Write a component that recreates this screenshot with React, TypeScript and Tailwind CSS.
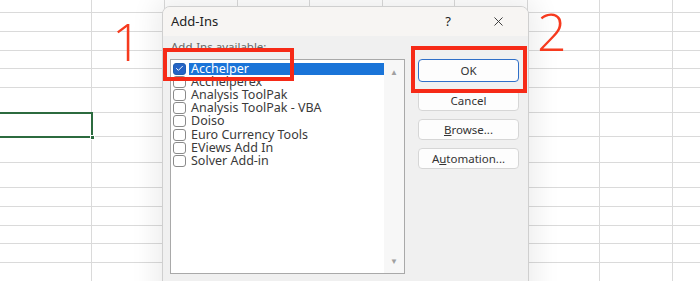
import { Check, X } from "lucide-react";

const rowHeights = [13, 19, 19, 18, 19, 25, 24, 26, 25, 19, 19, 18, 19, 30];
const colWidths = [92, 73, 73, 72, 73, 72, 73, 72, 73, 40];

const addIns = [
  "Acchelper",
  "Acchelperex",
  "Analysis ToolPak",
  "Analysis ToolPak - VBA",
  "Doiso",
  "Euro Currency Tools",
  "EViews Add In",
  "Solver Add-in",
];

function Sheet() {
  return (
    <div className="flex flex-col">
      {rowHeights.map((h, r) => (
        <div key={r} className="flex" style={{ height: h }}>
          {colWidths.map((w, c) => (
            <div
              key={c}
              className="shrink-0 border-r border-b border-[#dadada]"
              style={{ width: w }}
            />
          ))}
        </div>
      ))}
    </div>
  );
}

function DialogButton({
  label,
  focused,
}: {
  label: React.ReactNode;
  focused?: boolean;
}) {
  return (
    <button
      type="button"
      className={`flex items-center justify-center rounded-[4px] bg-[#fdfdfd] text-[11.5px] text-[#333] ${
        focused
          ? "h-[23px] border border-[#2f6fc8]"
          : "h-[21px] border border-[#d6d6d6]"
      }`}
    >
      {label}
    </button>
  );
}

function AddInsDialog() {
  return (
    <div className="absolute left-[162px] top-[6px] h-[300px] w-[367px] overflow-hidden rounded-t-[8px] border border-[#cfcfcf] bg-[#f0f0f0] shadow-[0_0_26px_8px_rgba(0,0,0,0.07)] font-['Noto_Sans',sans-serif]">
      <div className="flex h-[29px] items-center bg-[#f7f5f3] pl-[8px] pr-[22px] text-[13px] text-[#222]">
        <span>Add-Ins</span>
        <span className="ml-auto mr-[40px] text-[13px]">?</span>
        <X className="h-[15px] w-[15px] text-[#333]" strokeWidth={1.5} />
      </div>
      <div className="px-[8px] pt-[4px] text-[11.5px] leading-[14px] text-[#666]">
        Add-Ins available:
      </div>
      <div className="mt-[5px] flex gap-[13px] pl-[7px]">
        <div className="flex h-[215px] w-[235px] border border-[#a9a9a9] bg-white">
          <div className="flex flex-1 flex-col pt-[2px]">
            {addIns.map((name, i) => {
              const sel = i === 0;
              return (
                <div key={name} className="flex h-[13.2px] items-center">
                  <div
                    className={`ml-[2px] flex h-[12px] w-[13px] shrink-0 items-center justify-center rounded-[3px] border ${
                      sel
                        ? "border-[#1f5fb0] bg-[#2563c4]"
                        : "border-[#8a8a8a] bg-white"
                    }`}
                  >
                    {sel && (
                      <Check className="h-[9px] w-[9px] text-white" strokeWidth={2.5} />
                    )}
                  </div>
                  <div
                    className={`ml-[3px] flex h-[12px] flex-1 items-center pl-[2px] text-[12.5px] leading-[12px] ${
                      sel ? "bg-[#1a74d8] text-white" : "text-[#3a3a3a]"
                    }`}
                  >
                    {name}
                  </div>
                </div>
              );
            })}
          </div>
          <div className="flex w-[20px] flex-col items-center justify-between bg-[#f7f7f7] py-[6px] text-[8px] text-[#a0a0a0]">
            <span>▲</span>
            <span>▼</span>
          </div>
        </div>
        <div className="flex w-[101px] flex-col gap-[8px]">
          <DialogButton label="OK" focused />
          <DialogButton label="Cancel" />
          <DialogButton
            label={
              <span>
                <span className="underline">B</span>rowse...
              </span>
            }
          />
          <DialogButton
            label={
              <span>
                A<span className="underline">u</span>tomation...
              </span>
            }
          />
        </div>
      </div>
      <div className="px-[8px] pt-[3px] text-[11.5px] text-[#333]">Acchelper</div>
    </div>
  );
}

export default function App() {
  return (
    <div className="relative h-[281px] w-[700px] overflow-hidden bg-white">
      <Sheet />
      {/* selected cell */}
      <div className="absolute left-[-2px] top-[112px] h-[26px] w-[95px] border-2 border-[#2c6b3f]" />
      <div className="absolute left-[90px] top-[135px] h-[5px] w-[5px] bg-[#2c6b3f] border border-white" />

      <AddInsDialog />

      {/* annotations */}
      <div className="absolute left-[163px] top-[48px] h-[33px] w-[131px] border-[4px] border-[#f62a17]" />
      <div className="absolute left-[411px] top-[46px] h-[47px] w-[116px] border-[4px] border-[#f62a17]" />
      <div className="absolute left-[112px] top-[15px] text-[52px] font-light leading-none text-[#f63a1e] font-['Open_Sans',sans-serif]">
        1
      </div>
      <div className="absolute left-[537px] top-[5px] text-[52px] font-light leading-none text-[#f63a1e] font-['Open_Sans',sans-serif]">
        2
      </div>
    </div>
  );
}
